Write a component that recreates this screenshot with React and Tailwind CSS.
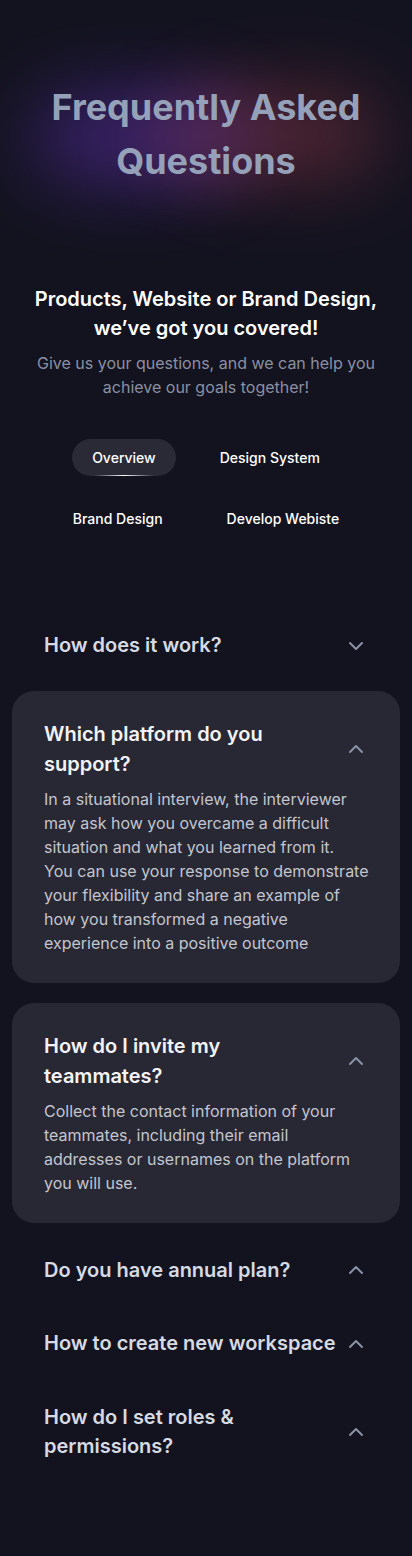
import { ChevronDown, ChevronUp } from 'lucide-react';

const tabs = ['Overview', 'Design System', 'Brand Design', 'Develop Webiste'];

const faqs = [
  { q: 'How does it work?', open: false, down: true },
  {
    q: 'Which platform do you support?',
    open: true,
    a: [
      'In a situational interview, the interviewer',
      'may ask how you overcame a difficult',
      'situation and what you learned from it.',
      'You can use your response to demonstrate',
      'your flexibility and share an example of',
      'how you transformed a negative',
      'experience into a positive outcome',
    ],
  },
  {
    q: 'How do I invite my teammates?',
    open: true,
    a: [
      'Collect the contact information of your',
      'teammates, including their email',
      'addresses or usernames on the platform',
      'you will use.',
    ],
  },
  { q: 'Do you have annual plan?', open: false },
  { q: 'How to create new workspace', open: false },
  { q: 'How do I set roles & permissions?', open: false },
];

const App = () => {
  return (
    <div
      className="min-h-screen overflow-hidden bg-[#13131f] pb-[71px]"
      style={{ fontFamily: 'Inter, "Noto Sans", sans-serif' }}
    >
      <div className="relative pt-20">
        {/* soft glow behind the title */}
        <div className="absolute left-[35px] top-[95px] w-[200px] h-[85px] rounded-full bg-[#4d2a92] opacity-70 blur-[38px] pointer-events-none"></div>
        <div className="absolute left-[190px] top-[92px] w-[190px] h-[85px] rounded-full bg-[#74303f] opacity-65 blur-[38px] pointer-events-none"></div>
        <div className="absolute left-[140px] top-[100px] w-[120px] h-[70px] rounded-full bg-[#5a2c62] opacity-60 blur-[32px] pointer-events-none"></div>
        <h1 className="relative text-center text-[36px] leading-[54px] font-bold text-[#95a1b8] px-4">
          Frequently Asked
          <br />
          Questions
        </h1>
      </div>

      <div className="mt-[97px] px-4 text-center">
        <h2 className="text-[20px] leading-[29px] font-semibold text-white">
          Products, Website or Brand Design,
          <br />
          we’ve got you covered!
        </h2>
        <p className="mt-2 text-[16px] leading-6 text-[#8b8fa2]">
          Give us your questions, and we can help you
          <br />
          achieve our goals together!
        </p>
      </div>

      <div className="mt-10 px-4 flex flex-wrap justify-center gap-x-6 gap-y-6">
        {tabs.map((t, i) => (
          <div
            key={t}
            className={`relative h-[37px] px-5 flex items-center rounded-full text-[14px] font-medium text-white ${i === 0 ? 'bg-[#2a2a36]' : ''}`}
          >
            {t}
            {i === 0 && (
              <div className="absolute bottom-0 left-[22px] right-[22px] h-px bg-gradient-to-r from-transparent via-white to-transparent"></div>
            )}
          </div>
        ))}
      </div>

      <div className="mt-[72px] flex flex-col">
        {faqs.map((f, i) =>
          f.open ? (
            <div
              key={f.q}
              className={`mx-3 px-8 py-7 rounded-[22px] bg-[#282834] ${i === 1 ? 'mt-2' : 'mt-5'} ${i === 2 ? 'mb-[11px]' : ''}`}
            >
              <div className="flex items-center justify-between gap-2">
                <h3 className="text-[20px] leading-[30px] font-semibold text-[#f3f3f6] max-w-[260px]">
                  {f.q}
                </h3>
                <ChevronUp className="w-6 h-6 shrink-0 text-[#8a92a6]" strokeWidth={2} />
              </div>
              <p className="mt-[8px] text-[16px] leading-6 text-[#c3c5ce]">
                {f.a.map((line) => (
                  <span key={line} className="block whitespace-nowrap">{line}</span>
                ))}
              </p>
            </div>
          ) : (
            <div key={f.q} className="mx-3 px-8 py-[22px] flex items-center justify-between gap-1">
              <h3 className="text-[20px] leading-[29.5px] font-semibold text-[#d6dae3] max-w-[300px]">
                {f.q}
              </h3>
              {f.down ? (
                <ChevronDown className="w-6 h-6 shrink-0 text-[#8a92a6]" strokeWidth={2} />
              ) : (
                <ChevronUp className="w-6 h-6 shrink-0 text-[#8a92a6]" strokeWidth={2} />
              )}
            </div>
          )
        )}
      </div>
    </div>
  );
};

export default App;
